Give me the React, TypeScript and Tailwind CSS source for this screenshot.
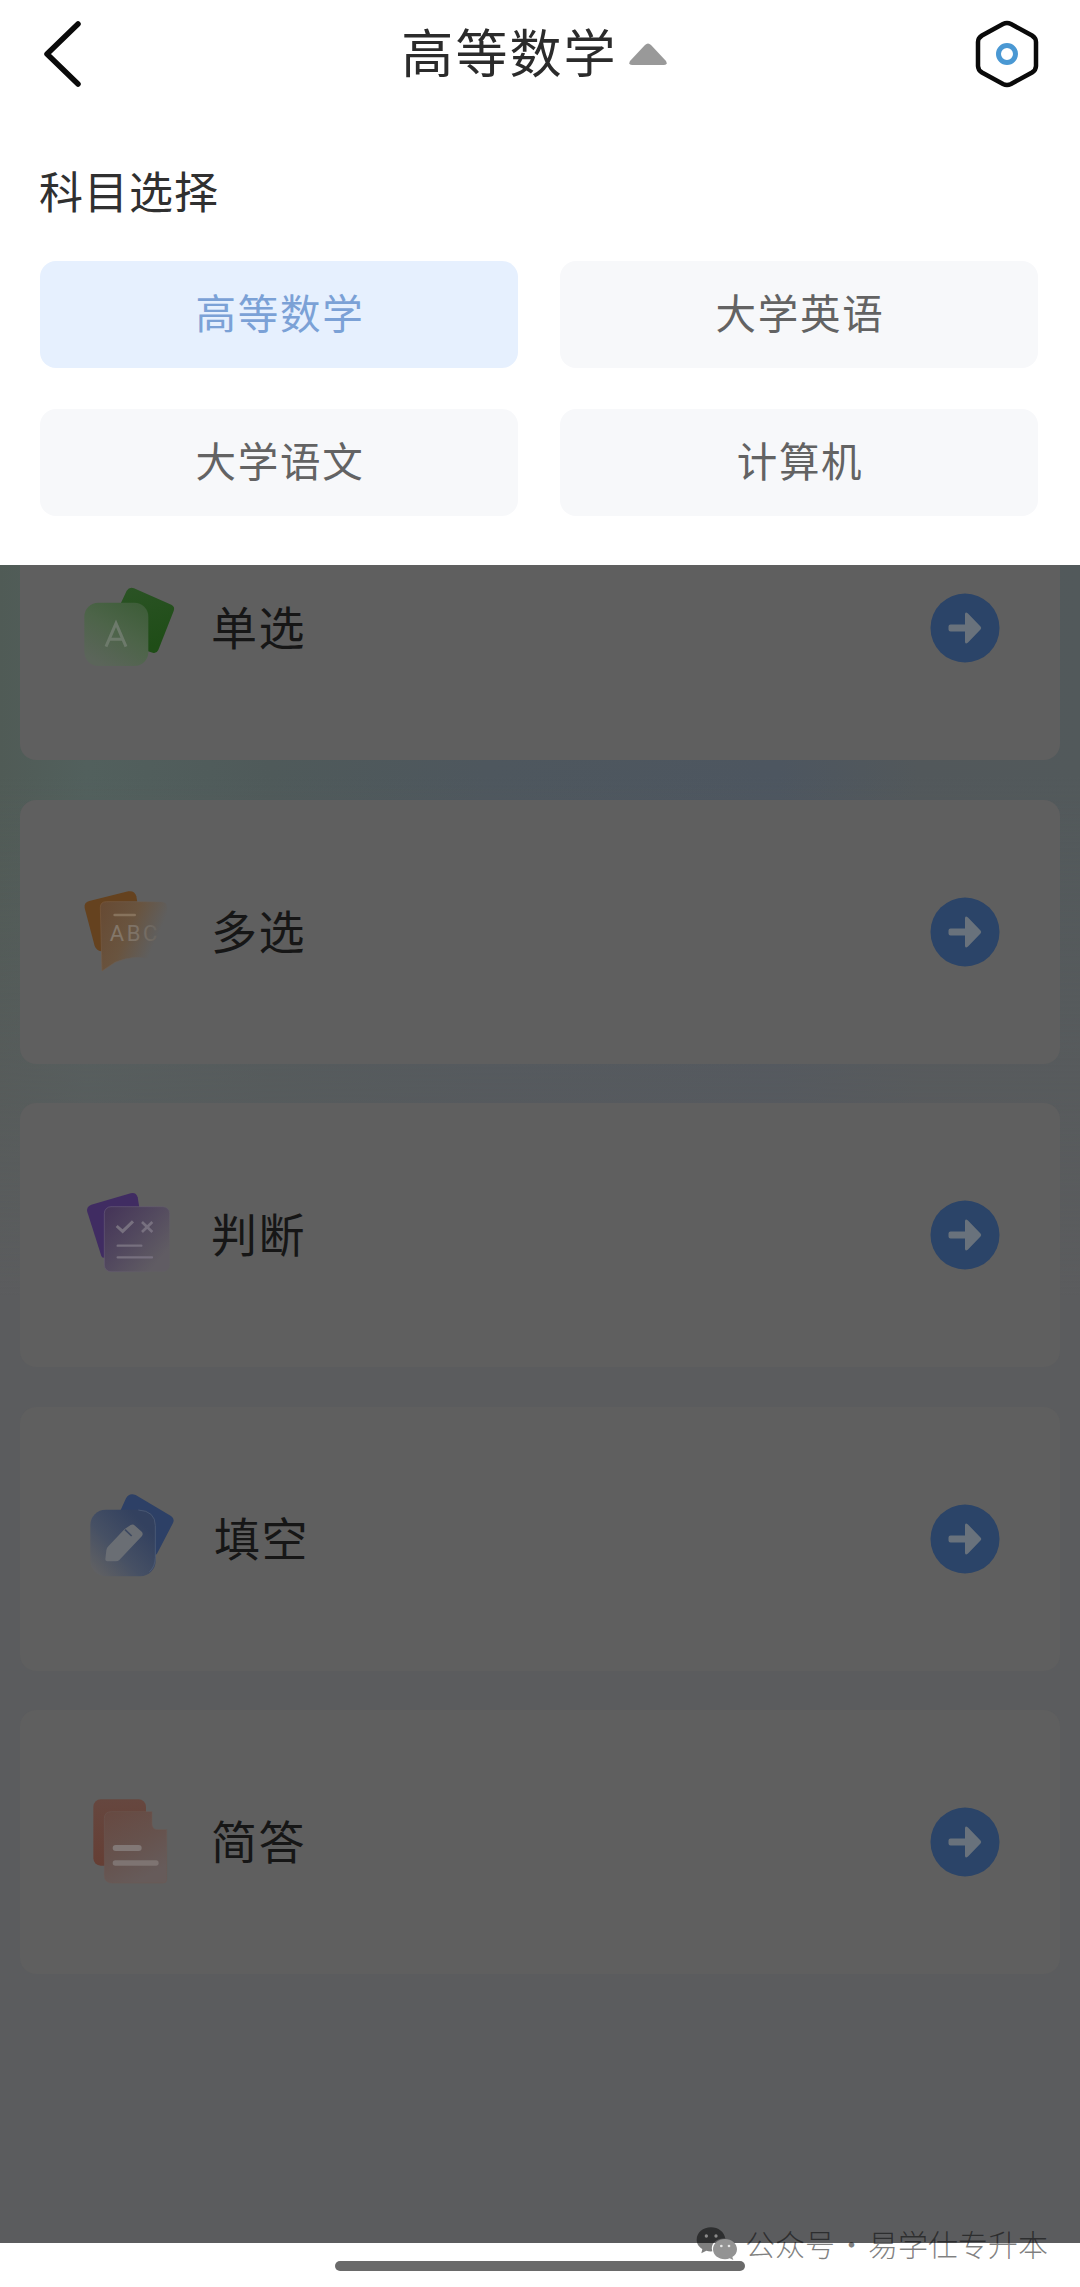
import type { ReactNode } from 'react';
import { clsx } from 'clsx';

const SUBJECTS = ['高等数学', '大学英语', '大学语文', '计算机'];

function SingleChoiceIcon() {
  return (
    <svg viewBox="60 18 312 312" className="h-[104px] w-[104px]" aria-hidden="true">
      <defs>
        <linearGradient id="single-back" x1="0" y1="0" x2="0.3" y2="1">
          <stop offset="0" stopColor="#2b5325" />
          <stop offset="1" stopColor="#1f4d17" />
        </linearGradient>
        <linearGradient id="single-front" x1="0.9" y1="0" x2="0.3" y2="1">
          <stop offset="0" stopColor="#3d5d38" />
          <stop offset="0.5" stopColor="#4d6449" />
          <stop offset="1" stopColor="#5b655a" />
        </linearGradient>
      </defs>
      <path
        d="M222 55L334 104Q346 110 341 123L295 240Q290 251 278 248L188 220L180 105L200 62Q208 50 222 55Z"
        fill="url(#single-back)"
      />
      <rect x="73" y="98" width="192" height="190" rx="42" fill="url(#single-front)" />
      <path d="M138 230L168 160L198 230M149 208H188" fill="none" stroke="#6d7a6b" strokeWidth="9" />
    </svg>
  );
}

function MultiChoiceIcon() {
  return (
    <svg viewBox="60 28 312 312" className="h-[104px] w-[104px]" aria-hidden="true">
      <defs>
        <linearGradient id="multi-front" x1="0" y1="0" x2="1" y2="0.45">
          <stop offset="0" stopColor="#674a33" />
          <stop offset="0.5" stopColor="#69543f" />
          <stop offset="0.9" stopColor="#5f5f5f" />
        </linearGradient>
        <linearGradient id="multi-edge" x1="0" y1="0" x2="1" y2="0.3">
          <stop offset="0" stopColor="#7a593d" />
          <stop offset="0.8" stopColor="#5f5f5f" />
        </linearGradient>
        <linearGradient id="multi-label" x1="0" y1="0" x2="1" y2="0">
          <stop offset="0" stopColor="#85786a" />
          <stop offset="0.6" stopColor="#7d7266" />
          <stop offset="1" stopColor="#68645f" />
        </linearGradient>
      </defs>
      <path
        d="M88 91L205 62Q224 59 229 77L236 120L140 240Q112 247 104 226L74 112Q71 96 88 91Z"
        fill="#65421f"
      />
      <path
        d="M139 93H304Q322 93 322 111V258Q322 274 304 270L232 260Q195 262 165 275L126 301L121 111Q121 93 139 93Z"
        fill="url(#multi-front)"
        stroke="url(#multi-edge)"
        strokeWidth="2"
      />
      <rect x="160" y="129" width="68" height="8" rx="4" fill="#87735d" />
      <text
        x="149"
        y="212"
        fill="url(#multi-label)"
        fontSize="66"
        className="font-['Roboto',sans-serif]"
        textLength="143"
        lengthAdjust="spacing"
      >
        ABC
      </text>
    </svg>
  );
}

function JudgeIcon() {
  return (
    <svg viewBox="60 23 312 312" className="h-[104px] w-[104px]" aria-hidden="true">
      <defs>
        <linearGradient id="judge-front" x1="0" y1="0" x2="0.9" y2="0.75">
          <stop offset="0" stopColor="#443358" />
          <stop offset="0.5" stopColor="#51475e" />
          <stop offset="1" stopColor="#605c63" />
        </linearGradient>
        <linearGradient id="judge-edge" x1="0" y1="0" x2="1" y2="0.6">
          <stop offset="0" stopColor="#66597a" />
          <stop offset="1" stopColor="#605e62" />
        </linearGradient>
      </defs>
      <path
        d="M94 88L212 54Q228 50 233 66L240 110L150 240Q130 254 124 242L82 110Q78 94 94 88Z"
        fill="#402c62"
      />
      <rect
        x="133"
        y="94"
        width="196"
        height="195"
        rx="20"
        fill="url(#judge-front)"
        stroke="url(#judge-edge)"
        strokeWidth="2"
      />
      <g fill="none" stroke="#77707f" strokeWidth="9">
        <path d="M170 152L188 168L219 138" />
        <path d="M246 140L277 170M277 140L246 170" strokeWidth="8" />
        <path d="M173 211H244M173 246H276" strokeWidth="7" strokeLinecap="round" />
      </g>
    </svg>
  );
}

function FillBlankIcon() {
  return (
    <svg viewBox="60 34 312 312" className="h-[104px] w-[104px]" aria-hidden="true">
      <defs>
        <linearGradient id="fill-front" x1="0.85" y1="0.25" x2="0.1" y2="0.95">
          <stop offset="0" stopColor="#33415f" />
          <stop offset="0.55" stopColor="#465064" />
          <stop offset="1" stopColor="#5f6063" />
        </linearGradient>
      </defs>
      <path
        d="M227 58L333 121Q345 129 339 142L291 234Q286 241 276 238L188 220L181 105L198 68Q208 50 227 58Z"
        fill="#2d4066"
      />
      <rect x="91" y="102" width="196" height="200" rx="46" fill="url(#fill-front)" />
      <path d="M235 103Q286 106 286 150V245Q285 275 268 288" fill="none" stroke="#53627d" strokeWidth="2" />
      <path
        d="M194 160L212 148Q219 144 225 150L246 169Q250 175 246 181L178 253Q174 257 168 257H142Q135 257 136 249L139 224Q140 217 145 212Z"
        fill="#6a6e74"
      />
      <path d="M195 162L215 181" fill="none" stroke="#3c4860" strokeWidth="5" />
    </svg>
  );
}

function ShortAnswerIcon() {
  return (
    <svg viewBox="60 30 312 312" className="h-[104px] w-[104px]" aria-hidden="true">
      <defs>
        <linearGradient id="short-back" x1="0" y1="0" x2="0" y2="1">
          <stop offset="0" stopColor="#66473f" />
          <stop offset="1" stopColor="#653e34" />
        </linearGradient>
        <linearGradient id="short-front" x1="0" y1="0" x2="0.5" y2="1">
          <stop offset="0" stopColor="#674941" />
          <stop offset="0.55" stopColor="#66524d" />
          <stop offset="1" stopColor="#665b5a" />
        </linearGradient>
      </defs>
      <rect x="100" y="58" width="158" height="199" rx="22" fill="url(#short-back)" />
      <path
        d="M154 95H276V132Q277 149 292 149H320V300Q320 309 309 309H157Q133 309 133 285V116Q133 95 154 95Z"
        fill="url(#short-front)"
        stroke="#6d5852"
        strokeWidth="1.5"
      />
      <rect x="158" y="195" width="87" height="18" rx="9" fill="#827876" />
      <rect x="158" y="241" width="138" height="16" rx="8" fill="#7e7472" />
    </svg>
  );
}

interface QuestionType {
  name: string;
  icon: ReactNode;
  labelClass?: string;
}

const QUESTION_TYPES: QuestionType[] = [
  { name: '单选', icon: <SingleChoiceIcon /> },
  { name: '多选', icon: <MultiChoiceIcon /> },
  { name: '判断', icon: <JudgeIcon /> },
  { name: '填空', icon: <FillBlankIcon />, labelClass: 'pl-[3px]' },
  { name: '简答', icon: <ShortAnswerIcon /> },
];

function NavBar() {
  return (
    <div className="flex h-[108px] items-center justify-between pr-[41px] pl-[40px]">
      <button aria-label="返回">
        <svg viewBox="0 0 46 70" className="h-[70px] w-[46px]" fill="none" aria-hidden="true">
          <path d="M38 5L7 35L38 65" stroke="#0a0a0a" strokeWidth="5.5" strokeLinecap="round" strokeLinejoin="round" />
        </svg>
      </button>
      <button className="ml-[8px] flex items-center gap-[10px]">
        <span className="pb-[6px] text-[52px] leading-[72px] tracking-[2.1px] text-[#2b2b2b]">高等数学</span>
        <svg viewBox="0 0 40 22" className="h-[22px] w-[40px]" aria-hidden="true">
          <path d="M17 2Q20 -1 23 2L38 18Q40 22 36 22H4Q0 22 2 18Z" fill="#999999" />
        </svg>
      </button>
      <button aria-label="设置">
        <svg viewBox="0 0 64 68" className="h-[68px] w-[64px]" fill="none" aria-hidden="true">
          <path
            d="M28 4Q32 2 36 4L57 15.5Q61 18 61 22V46Q61 50 57 52.5L36 64Q32 66 28 64L7 52.5Q3 50 3 46V22Q3 18 7 15.5Z"
            stroke="#0a0a0a"
            strokeWidth="4.5"
          />
          <circle cx="32" cy="34" r="8.5" stroke="#4a98d3" strokeWidth="5" />
        </svg>
      </button>
    </div>
  );
}

function SubjectPanel() {
  return (
    <section className="pt-[50px] pr-[42px] pl-[40px]">
      <h2 className="-ml-px text-[44px] leading-[64px] tracking-[1px] text-[#303030]">科目选择</h2>
      <div className="mt-[39px] grid grid-cols-2 gap-x-[42px] gap-y-[41px]">
        {SUBJECTS.map((subject, i) => (
          <button
            key={subject}
            className={clsx(
              'h-[107px] rounded-[16px] pb-[5px] pl-[2px] text-[40.5px] leading-none tracking-[1.7px]',
              i === 0 ? 'bg-[#e6f0fe] text-[#7ba1d6]' : 'bg-[#f7f8fa] text-[#636363]'
            )}
          >
            {subject}
          </button>
        ))}
      </div>
    </section>
  );
}

function QuestionCard({ name, icon, labelClass }: QuestionType) {
  return (
    <li className="flex h-[264px] items-center rounded-[16px] bg-[#5f5f5f] pr-[60px] pl-[60px]">
      {icon}
      <span
        className={clsx(
          'ml-[27px] flex-1 pb-[6px] text-[46px] leading-[66px] tracking-[1.4px] text-[#161616]',
          labelClass
        )}
      >
        {name}
      </span>
      <svg viewBox="0 0 70 70" className="h-[70px] w-[70px]" aria-hidden="true">
        <circle cx="35" cy="35" r="34.5" fill="#2b4468" />
        <path
          d="M20.5 31.500H35V21.500Q35 18 38 20.500L50.500 33.500Q52 35 50.500 36.500L38 49.500Q35 52 35 48.500V38.500H20.500Q18.500 38.500 18.500 36.500V33.500Q18.500 31.500 20.500 31.500Z"
          fill="#69727c"
        />
      </svg>
    </li>
  );
}

function Watermark() {
  return (
    <div className="absolute top-[2224px] left-[696px] flex h-[40px] items-center text-[30px] leading-[40px] font-light text-black/50">
      <svg viewBox="108 102 126 120" className="h-[40px] w-[42px]" aria-hidden="true">
        <path
          d="M153 112C129 112 110 128 110 149C110 161 117 171 127 177L124 190L139 182Q147 185 157 184C150 162 169 144 196 146C193 126 175 112 153 112Z"
          fill="currentColor"
        />
        <path
          d="M195 147C175 147 159 160 159 178C159 195 175 208 195 208Q203 208 209 205L220 210L217 201C226 196 231 188 231 178C231 160 215 147 195 147Z"
          fill="#939393"
        />
        <g fill="#8a8a8a">
          <circle cx="139" cy="138" r="5" />
          <circle cx="168" cy="138" r="5" />
        </g>
        <g fill="#e6e6e6">
          <circle cx="184" cy="168" r="4" />
          <circle cx="207" cy="168" r="4" />
        </g>
      </svg>
      <span className="-mt-[3px] ml-[7px]">公众号</span>
      <span className="-mt-[3px] w-[33px] text-center">·</span>
      <span className="-mt-[3px] whitespace-nowrap">易学仕专升本</span>
    </div>
  );
}

export default function App() {
  return (
    <div className="relative flex h-[2287px] w-[1080px] flex-col overflow-hidden bg-white font-['Noto_Sans_CJK_SC',sans-serif]">
      <header className="relative z-10 h-[565px] shrink-0 bg-white">
        <NavBar />
        <SubjectPanel />
      </header>

      <main className="-mt-[69px] h-[1747px] shrink-0 bg-[#5b5c5e]">
        {/* Tinted backdrop fades out behind the third card */}
        <div className="bg-[linear-gradient(to_bottom,transparent_280px,#5b5c5e_800px),linear-gradient(to_right,#505b56_0%,#52605d_8%,#4f5a5a_25%,#4e575e_45%,#4d5660_72%,#52585b_85%,#52595b_100%)]">
          <ul className="flex flex-col gap-[39.6px] px-[20px]">
            {QUESTION_TYPES.map((type) => (
              <QuestionCard key={type.name} {...type} />
            ))}
          </ul>
        </div>
      </main>

      <div className="flex flex-1 justify-center pt-[18px]">
        <div className="h-[10px] w-[410px] rounded-full bg-[#6a6a6a]" />
      </div>

      <Watermark />
    </div>
  );
}
